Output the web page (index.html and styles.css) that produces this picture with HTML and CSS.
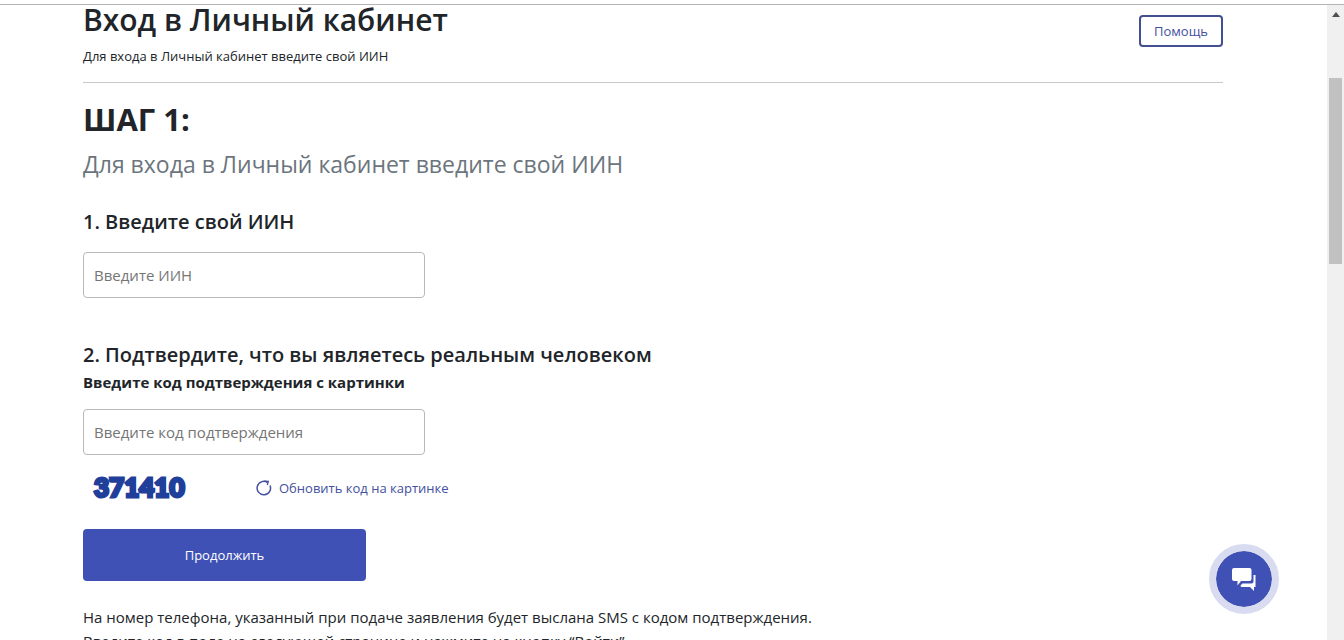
FILE: index.html
```html
<!DOCTYPE html>
<html lang="ru">
<head>
    <meta charset="UTF-8">
    <meta name="viewport" content="width=device-width, initial-scale=1.0">
    <title>Вход в Личный кабинет</title>
    <link rel="stylesheet" href="styles.css">
</head>
<body>
    <div class="page">
        <main class="content">
            <header class="header">
                <div>
                    <h1>Вход в Личный кабинет</h1>
                    <p class="subtitle">Для входа в Личный кабинет введите свой ИИН</p>
                </div>
                <button type="button" class="help-button">Помощь</button>
            </header>

            <h2>ШАГ 1:</h2>
            <p class="lead">Для входа в Личный кабинет введите свой ИИН</p>

            <form>
                <div class="field">
                    <label class="field-title" for="iin">1. Введите свой ИИН</label>
                    <input type="text" id="iin" placeholder="Введите ИИН">
                </div>

                <div class="field">
                    <h3 class="field-title">2. Подтвердите, что вы являетесь реальным человеком</h3>
                    <label class="field-label" for="captcha">Введите код подтверждения с картинки</label>
                    <input type="text" id="captcha" placeholder="Введите код подтверждения">
                </div>

                <div class="captcha">
                    <span class="captcha-code">371410</span>
                    <a class="captcha-refresh" href="#">
                        <svg width="16" height="16" viewBox="0 0 16 16" fill="none" stroke="currentColor" stroke-width="1.5">
                            <path d="M11.5 2.500A6.700 6.700 0 1 0 14 5.500"/>
                            <path d="M8.300 1.200L12.300 1.400L11.300 5" stroke-width="1.3"/>
                        </svg>
                        Обновить код на картинке
                    </a>
                </div>

                <button type="submit" class="submit-button">Продолжить</button>
            </form>

            <p class="note">
                На номер телефона, указанный при подаче заявления будет выслана SMS с кодом подтверждения.<br>
                Введите код в поле на следующей странице и нажмите на кнопку “Войти”
            </p>
        </main>

        <div class="scrollbar">
            <svg class="scroll-arrow" width="8" height="5" viewBox="0 0 8 5"><path d="M0 5L4 0L8 5Z" fill="#505050"/></svg>
            <div class="scroll-thumb"></div>
        </div>
    </div>

    <button type="button" class="chat-button" aria-label="Чат">
        <svg width="26" height="26" viewBox="0 0 26 26" fill="#fff">
            <path d="M3 2H18.500Q20.500 2 20.500 4V13Q20.500 15 18.500 15H10L6.500 19.500V15H3Q1 15 1 13V4Q1 2 3 2Z"/>
            <path d="M22.500 9H24.500V21H23V25L19 21H11Q9.500 21 9.500 19.500L11.500 17.500H20.500Q22.500 17.500 22.500 15.500Z"/>
        </svg>
    </button>
</body>
</html>
```

FILE: styles.css
```css
* {
    box-sizing: border-box;
}
body {
    margin: 0;
    font-family: "Open Sans", "Noto Sans", sans-serif;
    font-size: 15px;
    line-height: 24px;
    color: #212529;
    background: #fff;
}
h1, h2, h3, p {
    margin: 0;
}
button, input {
    font-family: inherit;
}
.page {
    display: flex;
    height: 100vh;
    padding-top: 4px;
    overflow: hidden;
    background: linear-gradient(#b4b4b4, #b4b4b4) 0 4px / 100% 1px no-repeat;
}
.content {
    flex: 1;
    padding: 0 104px 0 83px;
}
.header {
    display: flex;
    justify-content: space-between;
    align-items: flex-start;
    height: 79px;
    border-bottom: 1px solid #c8c8c8;
}
h1 {
    font-size: 30px;
    font-weight: 600;
    line-height: 32px;
}
.subtitle {
    margin-top: 8px;
    font-size: 13px;
}
.help-button {
    margin-top: 11px;
    width: 84px;
    height: 32px;
    padding: 0;
    font-size: 13px;
    color: #434f9f;
    background: #fff;
    border: 2px solid #434f8f;
    border-radius: 4px;
}
h2 {
    margin-top: 16px;
    font-size: 31px;
    font-weight: 700;
    line-height: 40px;
}
.lead {
    margin-top: 9px;
    font-size: 23px;
    line-height: 32px;
    color: #6c757d;
}
.field {
    margin-top: 27px;
}
.field + .field {
    margin-top: 42px;
}
.field-title {
    display: block;
    font-size: 20px;
    font-weight: 650;
    line-height: 30px;
}
.field-label {
    display: block;
    font-size: 15px;
    font-weight: 700;
}
.field input {
    display: block;
    width: 342px;
    height: 46px;
    margin-top: 15px;
    padding: 0 10px;
    font-size: 15px;
    background: #fff;
    border: 1px solid #b9b9b9;
    border-radius: 4px;
}
.field input::placeholder {
    color: #757575;
    opacity: 1;
}
.captcha {
    display: flex;
    align-items: center;
    height: 64px;
    padding-left: 11px;
}
.captcha-code {
    width: 162px;
    font-family: Lato, sans-serif;
    font-size: 26px;
    font-weight: 900;
    color: #1f3f9a;
    -webkit-text-stroke: 3px #1f3f9a;
}
.captcha-refresh {
    display: flex;
    align-items: center;
    gap: 7px;
    padding-top: 2px;
    font-size: 13px;
    color: #434f9f;
    text-decoration: none;
}
.submit-button {
    display: block;
    width: 283px;
    height: 52px;
    margin-top: 10px;
    font-size: 13px;
    font-weight: 500;
    color: #fff;
    background: #3f51b5;
    border: 0;
    border-radius: 4px;
}
.note {
    margin-top: 24px;
}
.scrollbar {
    width: 17px;
    margin-top: 1px;
    padding: 7px 2px 0;
    background: #f0f0f0;
}
.scroll-arrow {
    display: block;
    margin: 0 auto 61px;
}
.scroll-thumb {
    height: 186px;
    background: #c1c1c1;
}
.chat-button {
    position: fixed;
    right: 65px;
    bottom: 26px;
    display: flex;
    align-items: center;
    justify-content: center;
    width: 70px;
    height: 70px;
    padding: 0;
    background: #3f51b5;
    background-clip: padding-box;
    border: 7px solid #d9dcf0;
    border-radius: 50%;
}
```
